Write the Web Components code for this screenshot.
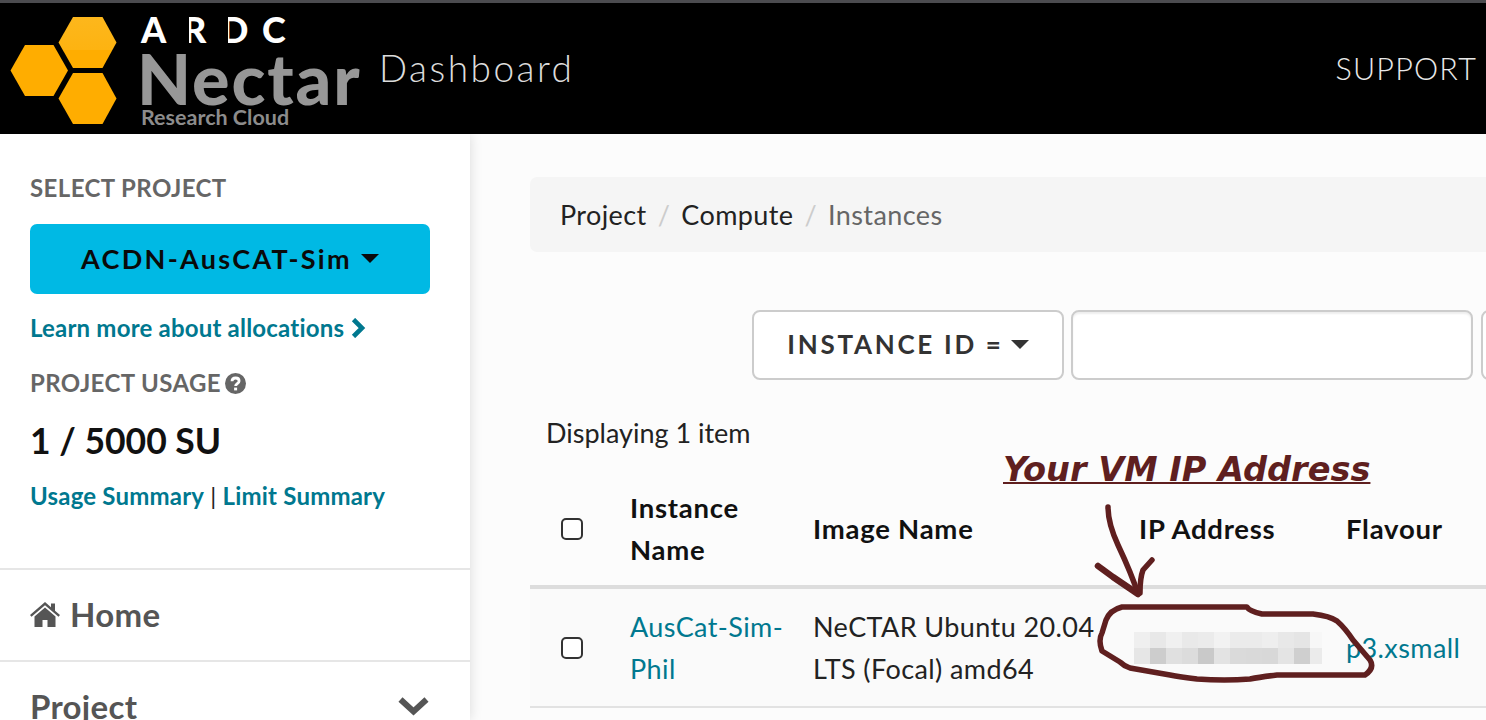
<!DOCTYPE html>
<html lang="en">
<head>
<meta charset="utf-8">
<title>Nectar Dashboard</title>
<style>
    html, body { margin: 0; height: 720px; overflow: hidden; background: #fcfcfc; }
    body { font-family: Lato, "Open Sans", sans-serif; color: #1a1a1a; position: relative; }
</style>
</head>
<body>
<nectar-navbar></nectar-navbar>
<dash-layout>
    <side-bar slot="side"></side-bar>
    <instances-page slot="main"></instances-page>
</dash-layout>
<vm-annotation></vm-annotation>

<script>
class NectarLogo extends HTMLElement {
    constructor() {
        super();
        this.attachShadow({ mode: 'open' });
        this.shadowRoot.innerHTML = `
            <style>
                :host { display: flex; align-items: flex-start; }
                svg { width: 117px; height: 110px; margin: 11px 0 0 10px; flex: none; }
                .words { margin: 12px 0 0 14px; width: 225px; }
                .ardc { display: flex; height: 29px; font: 900 36px/29px Lato, sans-serif; color: #fff; }
                .ardc span { display: block; }
                .ardc .a { width: 42px; }
                .ardc .r { width: 38px; clip-path: inset(0 0 0 6px); }
                .ardc .d { width: 41px; clip-path: inset(0 0 0 7px); }
                .name { font: 900 70px/56px Lato, sans-serif; color: #979797; letter-spacing: 1.900px; margin: 6px 0 0 -4px; }
                .sub { font: 700 21.500px/18px Lato, sans-serif; color: #8c8c8c; margin-top: 2px; }
            </style>
            <svg viewBox="0 0 117 110" aria-hidden="true">
                <defs>
                    <linearGradient id="hexTop" x1="0" y1="0" x2="0" y2="1">
                        <stop offset="0" stop-color="#fdb71c"/>
                        <stop offset=".65" stop-color="#fdb311"/>
                        <stop offset=".65" stop-color="#ffad00"/>
                    </linearGradient>
                </defs>
                <polygon fill="url(#hexTop)" points="63,3 92.500,3 106.500,28.500 92.500,54 63,54 48.500,28.500"/>
                <polygon fill="#ffad00" points="15,31 43.500,31 58,56.500 43.500,82 15,82 0.500,56.500"/>
                <polygon fill="#ffad00" points="63,59 92.500,59 106.500,84.500 92.500,110 63,110 48.500,84.500"/>
            </svg>
            <div class="words">
                <div class="ardc"><span class="a">A</span><span class="r">R</span><span class="d">D</span><span class="c">C</span></div>
                <div class="name">Nectar</div>
                <div class="sub">Research Cloud</div>
            </div>
        `;
    }
}

class NectarNavbar extends HTMLElement {
    constructor() {
        super();
        this.attachShadow({ mode: 'open' });
        this.shadowRoot.innerHTML = `
            <style>
                :host { display: flex; height: 131px; background: #000; border-top: 3px solid #4b4b4f; box-sizing: content-box; position: relative; z-index: 2; }
                nectar-logo { flex: none; }
                .brand { font: 300 37px/44px Lato, sans-serif; color: #dcdcdc; margin: 43px 0 0 13px; letter-spacing: 2.500px; }
                .spacer { flex: 1; }
                .support { font: 300 30.500px/36px Lato, sans-serif; color: #e8e8e8; margin: 47px 9px 0 0; letter-spacing: 1.200px; }
            </style>
            <nectar-logo></nectar-logo>
            <div class="brand">Dashboard</div>
            <div class="spacer"></div>
            <div class="support">SUPPORT</div>
        `;
    }
}

class DashLayout extends HTMLElement {
    constructor() {
        super();
        this.attachShadow({ mode: 'open' });
        this.shadowRoot.innerHTML = `
            <style>
                :host { display: flex; height: 586px; overflow: hidden; }
                ::slotted([slot=side]) { flex: none; }
                ::slotted([slot=main]) { flex: 1; min-width: 0; }
            </style>
            <slot name="side"></slot>
            <slot name="main"></slot>
        `;
    }
}

class SideItem extends HTMLElement {
    constructor() {
        super();
        this.attachShadow({ mode: 'open' });
        this.shadowRoot.innerHTML = `
            <style>
                :host { display: flex; align-items: center; height: 90px; padding: 0 41px 0 30px; border-top: 2px solid #e6e6e6; font-size: 33px; font-weight: 700; color: #555; letter-spacing: .3px; }
                .label { flex: 1; display: flex; align-items: center; gap: 10px; padding-bottom: 2px; }
            </style>
            <div class="label"><slot name="icon"></slot><slot></slot></div>
            <slot name="end"></slot>
        `;
    }
}

class SideBar extends HTMLElement {
    constructor() {
        super();
        this.attachShadow({ mode: 'open' });
        this.shadowRoot.innerHTML = `
            <style>
                :host { display: block; width: 470px; height: 586px; background: #fff; box-shadow: 0 0 12px rgba(0,0,0,.14); position: relative; box-sizing: border-box; padding-top: 40px; }
                .top { padding: 0 40px 0 30px; height: 394px; box-sizing: border-box; }
                h4 { margin: 0; font-size: 24px; line-height: 28px; font-weight: 700; color: #666; display: flex; align-items: center; gap: 4px; letter-spacing: .4px; }
                .project { display: flex; align-items: center; justify-content: center; gap: 9px; height: 70px; box-sizing: border-box; padding-bottom: 2px; margin-top: 22px; background: #00b9e4; border-radius: 7px; color: #0a0a0a; font-size: 27px; font-weight: 700; letter-spacing: 2.300px; }
                .caret { width: 0; height: 0; border: 9px solid transparent; border-top: 9px solid #0a0a0a; border-bottom: 0; }
                a { color: #00788f; font-size: 24px; font-weight: 700; text-decoration: none; letter-spacing: .2px; }
                .learn { margin-top: 20px; line-height: 28px; display: flex; align-items: center; gap: 7px; }
                .usage { margin-top: 27px; }
                .su { margin-top: 24px; font-size: 35.500px; line-height: 40px; font-weight: 700; color: #111; }
                .links { margin-top: 21px; line-height: 28px; font-size: 24px; color: #222; }
            </style>
            <div class="top">
                <h4>SELECT PROJECT</h4>
                <div class="project">ACDN-AusCAT-Sim<span class="caret"></span></div>
                <a class="learn" href="#">Learn more about allocations
                    <svg width="15" height="20" viewBox="0 0 15 20"><path fill="none" stroke="#00788f" stroke-width="4.600" d="M2.500 1.500l8.500 8.500-8.500 8.500"/></svg>
                </a>
                <h4 class="usage">PROJECT USAGE
                    <svg width="21" height="21" viewBox="0 0 21 21"><circle cx="10.500" cy="10.500" r="10.500" fill="#666"/><path fill="none" stroke="#fff" stroke-width="2.800" d="M7 8.300c0-2 1.500-3.300 3.600-3.300s3.500 1.300 3.500 3c0 2.600-3.500 2.600-3.500 5"/><rect x="9.100" y="14.600" width="3" height="2.800" fill="#fff"/></svg>
                </h4>
                <div class="su">1 / 5000 SU</div>
                <div class="links"><a href="#">Usage Summary</a> | <a href="#">Limit Summary</a></div>
            </div>
            <side-item>
                <svg slot="icon" width="30" height="25" viewBox="0 0 30 25"><path fill="#555" d="M15 0L0 13l1.500 1.800L15 3.200l13.500 11.600L30 13l-5-4.300V1.500h-4v3.800zM15 5.500L4.500 14.500V25h8v-7h5v7h8V14.500z"/></svg>
                Home
            </side-item>
            <side-item>
                Project
                <svg slot="end" width="31" height="20" viewBox="0 0 31 20"><path fill="none" stroke="#555" stroke-width="6" d="M2.500 2.500l13 12 13-12"/></svg>
            </side-item>
        `;
    }
}

class BreadCrumb extends HTMLElement {
    constructor() {
        super();
        this.attachShadow({ mode: 'open' });
        this.shadowRoot.innerHTML = `
            <style>
                :host { display: flex; align-items: center; height: 75px; padding: 0 0 1px 30px; box-sizing: border-box; background: #f5f5f5; border-radius: 7px 0 0 7px; font-size: 27px; letter-spacing: .4px; color: #222; }
                .sep { color: #ccc; margin: 0 11px; }
                .here { color: #666; }
            </style>
            <span>Project</span><span class="sep">/</span><span>Compute</span><span class="sep">/</span><span class="here">Instances</span>
        `;
    }
}

class FilterBar extends HTMLElement {
    constructor() {
        super();
        this.attachShadow({ mode: 'open' });
        this.shadowRoot.innerHTML = `
            <style>
                :host { display: flex; gap: 7px; height: 70px; margin-left: 222px; }
                .box { box-sizing: border-box; height: 70px; flex: none; border: 2px solid #ccc; border-radius: 8px; background: #fff; }
                .pick { width: 312px; display: flex; align-items: center; justify-content: center; gap: 7px; font-size: 26px; font-weight: 700; color: #333; letter-spacing: 2.700px; padding-bottom: 2px; }
                .caret { width: 0; height: 0; border: 9px solid transparent; border-top: 9px solid #333; border-bottom: 0; }
                .text { width: 402px; box-shadow: inset 0 2px 2px rgba(0,0,0,.07); }
                .more { width: 100px; margin-left: 1px; }
            </style>
            <div class="box pick">INSTANCE ID =<span class="caret"></span></div>
            <div class="box text"></div>
            <div class="box more"></div>
        `;
    }
}

class IpBlur extends HTMLElement {
    constructor() {
        super();
        this.attachShadow({ mode: 'open' });
        const shades = [
            '#efefef','#e8e8e8','#f0f0f0','#e9e9e9','#ebebeb','#f2f2f2','#ebebeb','#ebebeb','#eeeeee','#e8e8e8','#e5e5e5','#f7f7f7',
            '#e6e6e6','#cdcdcd','#e0e0e0','#dcdcdc','#c9c9c9','#e3e3e3','#dadada','#d9d9d9','#d8d8d8','#e4e4e4','#cfcfcf','#ebebeb'
        ];
        this.shadowRoot.innerHTML = `
            <style>
                :host { display: grid; grid-template-columns: repeat(11, 16px) 12px; grid-auto-rows: 16px; width: 188px; }
            </style>
            ${shades.map(c => `<div style="background:${c}"></div>`).join('')}
        `;
    }
}

class CheckMark extends HTMLElement {
    constructor() {
        super();
        this.attachShadow({ mode: 'open' });
        this.shadowRoot.innerHTML = `
            <style>
                :host { display: block; box-sizing: border-box; width: 22px; height: 22px; border: 2px solid #333; border-radius: 5px; background: #fff; }
            </style>
        `;
    }
}

class InstanceTable extends HTMLElement {
    constructor() {
        super();
        this.attachShadow({ mode: 'open' });
        this.shadowRoot.innerHTML = `
            <style>
                :host { display: block; font-size: 27px; line-height: 42px; color: #222; letter-spacing: .4px; }
                .row { display: grid; grid-template-columns: 100px 183px 326px 207px 1fr; align-items: center; }
                .head { height: 113px; font-weight: 700; color: #111; border-bottom: 4px solid #ddd; font-size: 27.500px; letter-spacing: .75px; }
                .body { height: 117px; background: #fafafa; border-bottom: 2px solid #e2e2e2; }
                check-mark { margin-left: 31px; }
                a { color: #00788f; text-decoration: none; }
            </style>
            <div class="row head">
                <check-mark></check-mark>
                <div>Instance<br>Name</div>
                <div>Image Name</div>
                <div>IP Address</div>
                <div>Flavour</div>
            </div>
            <div class="row body">
                <check-mark></check-mark>
                <div><a href="#">AusCat-Sim-<br>Phil</a></div>
                <div>NeCTAR Ubuntu 20.04<br>LTS (Focal) amd64</div>
                <div><ip-blur style="margin-left:-5px"></ip-blur></div>
                <div><a href="#">p3.xsmall</a></div>
            </div>
        `;
    }
}

class InstancesPage extends HTMLElement {
    constructor() {
        super();
        this.attachShadow({ mode: 'open' });
        this.shadowRoot.innerHTML = `
            <style>
                :host { display: block; height: 586px; overflow: hidden; padding: 43px 0 0 60px; box-sizing: border-box; background: #fcfcfc; }
                filter-bar { margin-top: 58px; }
                .count { margin: 38px 0 0 16px; font-size: 27px; line-height: 30px; color: #222; }
                instance-table { margin-top: 24px; }
            </style>
            <bread-crumb></bread-crumb>
            <filter-bar></filter-bar>
            <div class="count">Displaying 1 item</div>
            <instance-table></instance-table>
        `;
    }
}

// hand-drawn markup on top of the screenshot
class VmAnnotation extends HTMLElement {
    constructor() {
        super();
        this.attachShadow({ mode: 'open' });
        this.shadowRoot.innerHTML = `
            <style>
                :host { position: absolute; left: 0; top: 0; width: 1486px; height: 720px; pointer-events: none; z-index: 3; }
                .note { position: absolute; left: 1003px; top: 450px; font: italic 700 33.600px/40px "DejaVu Sans", sans-serif; color: #5f1f1f; text-decoration: underline; text-decoration-thickness: 2px; white-space: nowrap; }
                svg { position: absolute; left: 0; top: 0; }
                path { fill: none; stroke: #5f1f1f; stroke-linecap: round; stroke-linejoin: round; }
            </style>
            <div class="note">Your VM IP Address</div>
            <svg width="1486" height="720" viewBox="0 0 1486 720">
                <path stroke-width="5.500" d="M1108 507C1108 520 1112 532 1118 545C1126 562 1133 578 1138 594"/>
                <path stroke-width="6.500" d="M1098 566L1113 577L1138 594"/>
                <path stroke-width="5.500" d="M1152 560L1143 570C1140 578 1140 586 1140 593"/>
                <path stroke-width="5.500" d="M1122 607L1247 607Q1249 611 1262 614L1313 614Q1330 616 1337 621Q1345 628 1353 640L1370 660Q1375 668 1365 675L1277 675Q1260 677 1250 679Q1225 681 1197 679Q1180 677 1170 675L1130 668Q1124 666 1120 662L1102 651Q1098 640 1102 633L1106 620Q1110 610 1122 607Z"/>
            </svg>
        `;
    }
}

customElements.define('nectar-logo', NectarLogo);
customElements.define('nectar-navbar', NectarNavbar);
customElements.define('dash-layout', DashLayout);
customElements.define('side-item', SideItem);
customElements.define('side-bar', SideBar);
customElements.define('bread-crumb', BreadCrumb);
customElements.define('filter-bar', FilterBar);
customElements.define('ip-blur', IpBlur);
customElements.define('check-mark', CheckMark);
customElements.define('instance-table', InstanceTable);
customElements.define('instances-page', InstancesPage);
customElements.define('vm-annotation', VmAnnotation);
</script>
</body>
</html>
